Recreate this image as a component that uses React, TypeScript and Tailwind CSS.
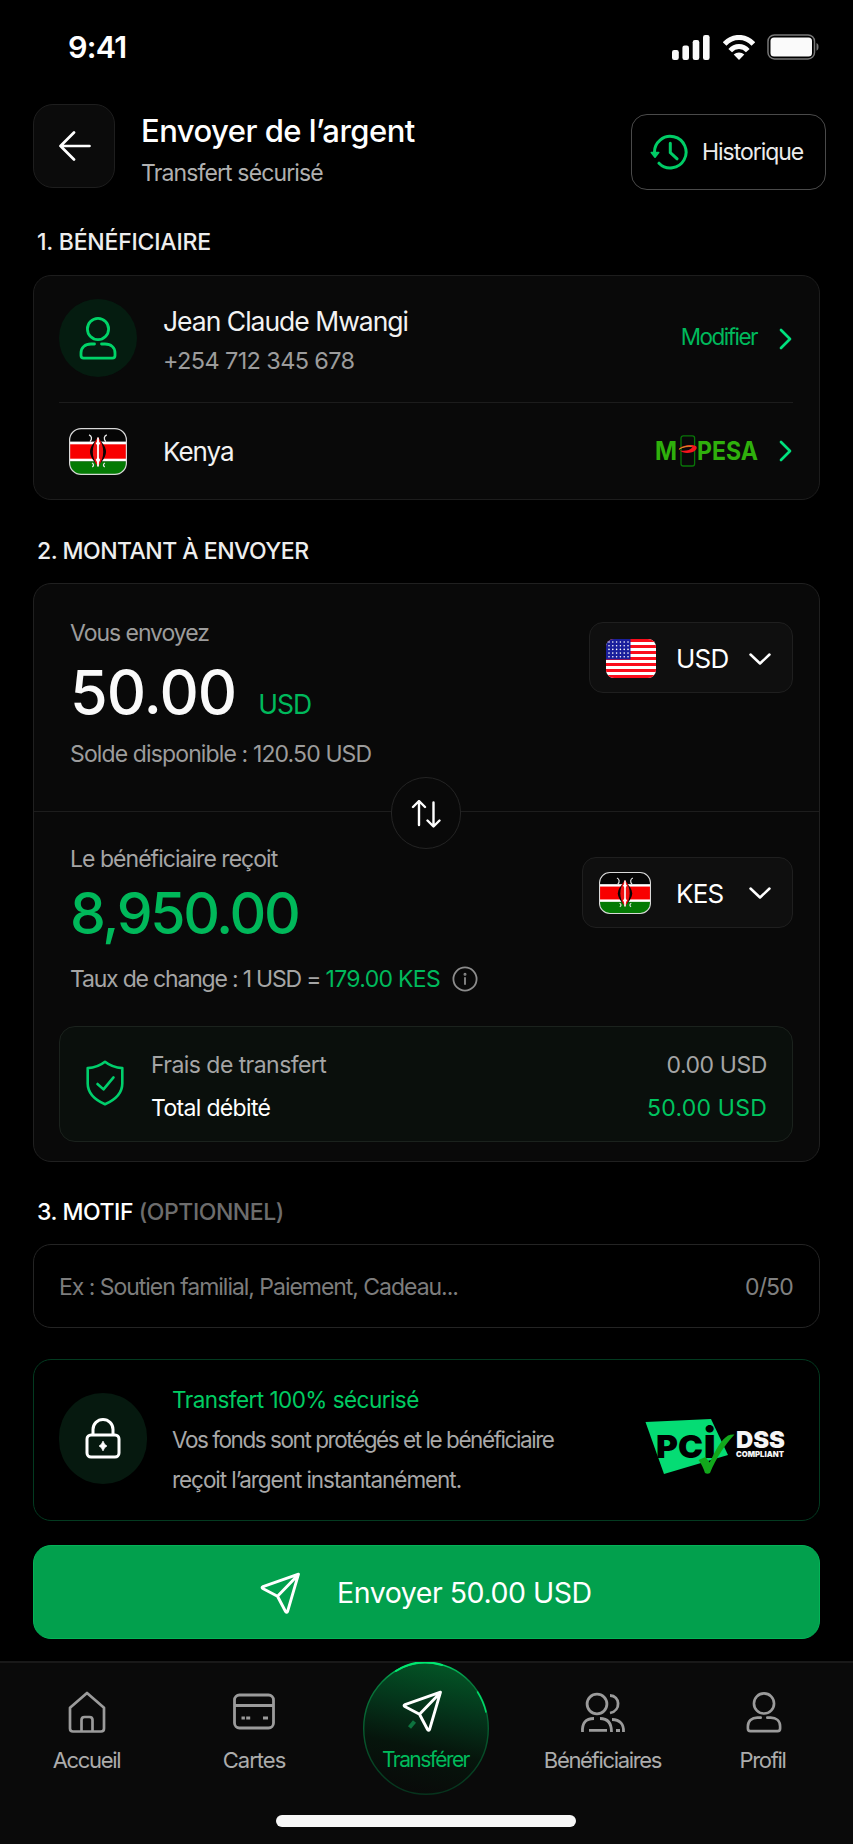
import React, { useState } from "react";

const KenyaFlag: React.FC<{ className?: string }> = ({ className }) => (
    <svg viewBox="0 0 58 47" preserveAspectRatio="none" className={className}>
        <clipPath id="kenya-clip">
            <rect x="0.5" y="0.5" width="57" height="46" rx="12" />
        </clipPath>
        <g clipPath="url(#kenya-clip)">
            <rect width="58" height="47" fill="#050505" />
            <rect y="13.6" width="58" height="20" fill="#fff" />
            <rect y="16.3" width="58" height="14.4" fill="#f80000" />
            <rect y="33.4" width="58" height="14" fill="#047a04" />
            <path d="M29 10.5c5 4.500 8 9 8 13.200S34 33 29 37.500c-5-4.500-8-9.600-8-13.800S24 15 29 10.500z" fill="#0a0404" />
            <path d="M29 9c3.800 5 5.200 10 5.200 14.800S32.800 34 29 38.800c-3.800-4.800-5.200-10.200-5.200-15S25.200 14 29 9z" fill="#f01010" />
            <path d="M29 9.500v29" stroke="#fff" strokeWidth="1.800" />
            <path d="M29 12l2.300 3.500-2.300 2.500-2.300-2.500zM29 29l2.300 2.700-2.300 4-2.300-4z" fill="#fff" />
            <path d="M20 6.800c2.800 1 3.400 4.200 1 6.800M37.800 6.800c-2.800 1-3.400 4.200-1 6.800M23 35c2 .8 2 3 .2 3.800M36 35c-2 .8-2 3-.2 3.800" stroke="#e8e8e8" strokeWidth="1.300" fill="none" />
        </g>
        <rect x="0.6" y="0.6" width="56.800" height="45.800" rx="11.500" fill="none" stroke="#d8d8d8" strokeWidth="1.200" />
    </svg>
);

const UsaFlag: React.FC = () => (
    <svg viewBox="0 0 50 39" className="h-[39px] w-[50px]">
        <clipPath id="usa-clip">
            <rect width="50" height="39" rx="8" />
        </clipPath>
        <g clipPath="url(#usa-clip)">
            <rect width="50" height="39" fill="#fff" />
            {[0, 1, 2, 3, 4, 5, 6].map((i) => (
                <rect key={i} y={i * 6} width="50" height="3" fill="#fb0d1b" />
            ))}
            <rect width="24.500" height="20.500" fill="#1a1f9c" />
            {[0, 1, 2, 3, 4].map((row) =>
                [0, 1, 2, 3, 4, 5].map((col) => (
                    <circle key={`${row}-${col}`} cx={3 + col * 3.8} cy={3 + row * 3.7} r="0.8" fill="#fff" />
                ))
            )}
        </g>
    </svg>
);

const PlaneIcon: React.FC = () => (
    <svg viewBox="0 0 41 42" className="h-[42px] w-[41px]" fill="none" stroke="currentColor" strokeWidth="2.900" strokeLinecap="round" strokeLinejoin="round">
        <path d="M38.500 2.200L3 14.600q-1.800.8-.2 1.900l14.700 7.800 8.200 15.400q1.100 1.400 1.900-.3zM17.500 24.300L37.600 3.600" />
    </svg>
);

const PersonIcon: React.FC<{ className?: string }> = ({ className }) => (
    <svg viewBox="0 0 38 44" className={className} fill="none" stroke="currentColor" strokeWidth="2.800" strokeLinecap="round" strokeLinejoin="round">
        <circle cx="19" cy="13" r="10.600" />
        <path d="M15.500 28H12C6 28 2 31.500 2 37v2.500Q2 42.200 4.700 42.200h28.600Q36 42.200 36 39.500V37c0-5.500-4-9-10-9h-3.500" />
    </svg>
);

const ChevronRight: React.FC = () => (
    <svg viewBox="0 0 13 22" className="h-[22px] w-[13px]" fill="none" stroke="#00e07e" strokeWidth="2.700" strokeLinecap="round" strokeLinejoin="round">
        <path d="M2 2l9 9-9 9" />
    </svg>
);

const ChevronDown: React.FC = () => (
    <svg viewBox="0 0 22 12" className="h-3 w-[22px]" fill="none" stroke="currentColor" strokeWidth="2.500" strokeLinecap="round" strokeLinejoin="round">
        <path d="M1.500 1.500l9.500 9 9.500-9" />
    </svg>
);

const StatusBar: React.FC = () => (
    <div className="flex h-[104px] items-start justify-between pt-[29px] pr-[34px] pl-[68px]">
        <span className="text-[30.500px] leading-9 font-semibold tracking-[-0.025em]">9:41</span>
        <div className="flex items-center pt-[5px]">
            <svg viewBox="0 0 38 25" className="h-[25px] w-[38px]" fill="#fafafa">
                <rect x="0" y="15" width="6.800" height="10" rx="2.200" />
                <rect x="10.400" y="10.500" width="6.600" height="14.500" rx="2.200" />
                <rect x="20.700" y="5" width="6.600" height="20" rx="2.200" />
                <rect x="31" y="0" width="6.600" height="25" rx="2.200" />
            </svg>
            <svg viewBox="0 0 32 25" className="ml-[13px] h-[25px] w-8" fill="none" stroke="#fafafa" strokeWidth="5">
                <path d="M1.600 9C9.500 0.200 22.500 0.200 30.400 9" />
                <path d="M7.200 15.600c5-5.400 12.600-5.400 17.600 0" />
                <path d="M16 25l-5.300-5.600c3-2.700 7.600-2.700 10.600 0z" fill="#fafafa" stroke="none" />
            </svg>
            <svg viewBox="0 0 52 26" className="ml-3 h-[26px] w-[52px]">
                <rect x="1" y="0.900" width="46.500" height="24" rx="6.500" fill="none" stroke="#777" strokeWidth="1.500" />
                <rect x="3.500" y="3.600" width="41.500" height="18.800" rx="3.500" fill="#fafafa" />
                <path d="M49.500 9c1.700.7 2 2 2 3.800s-.3 3.200-2 4z" fill="#777" />
            </svg>
        </div>
    </div>
);

const Header: React.FC = () => (
    <header className="flex h-[84px] items-start pr-[27px] pl-[33px]">
        <button className="flex h-[84px] w-[82px] items-center justify-center rounded-[20px] border border-[#1e1e1e] bg-[#0b0b0b] pl-[2px]">
            <svg viewBox="0 0 32 30" className="h-[30px] w-8" fill="none" stroke="currentColor" strokeWidth="2.700" strokeLinecap="round" strokeLinejoin="round">
                <path d="M15 1.500L1.500 15 15 28.500M1.500 15h29" />
            </svg>
        </button>
        <div className="ml-[26px] flex flex-1 flex-col pt-2">
            <h1 className="text-[31px] leading-[37px] font-medium tracking-[-0.017em]">Envoyer de l’argent</h1>
            <p className="mt-[9px] text-[23px] leading-[30px] tracking-[-0.038em] text-[#b0b0b0]">Transfert sécurisé</p>
        </div>
        <button className="mt-[10px] flex h-[76px] w-[195px] items-center rounded-2xl border border-[#4a4a4a] pl-[18px]">
            <svg viewBox="0 0 38 36" className="h-9 w-[38px]" fill="none" stroke="#00cc66" strokeWidth="3" strokeLinecap="round">
                <path d="M4.500 19A15.800 15.800 0 1 1 9 29.200" />
                <path d="M20.300 9.200v9.300l6.800 6.300" />
                <path d="M1.300 18.600h7.400l-3.700 4.600z" fill="#00cc66" strokeWidth="1.600" strokeLinejoin="round" />
            </svg>
            <span className="ml-[14px] text-[23px] leading-[30px] tracking-[-0.045em] text-[#ececec]">Historique</span>
        </button>
    </header>
);

const Beneficiary: React.FC = () => (
    <section className="mt-[21px] flex h-[225px] flex-col rounded-[18px] border border-[#1d1d1d] bg-[#090909] pr-[26px] pl-[25px]">
        <div className="flex h-[127px] items-center border-b border-[#1c1c1c]">
            <div className="mt-[-2px] flex h-[78px] w-[78px] items-center justify-center rounded-full bg-[#051c10] text-[#00d468]">
                <PersonIcon className="h-[44px] w-[38px]" />
            </div>
            <div className="ml-[26px] flex flex-1 flex-col pt-1">
                <span className="text-[26.500px] leading-[36px] tracking-[-0.038em] text-[#f2f2f2]">Jean Claude Mwangi</span>
                <span className="mt-1 text-[23.500px] leading-[36px] tracking-[-0.027em] text-[#9c9c9c]">+254 712 345 678</span>
            </div>
            <span className="mt-[-5px] text-[22.500px] tracking-[-0.067em] text-[#00b95c]">Modifier</span>
            <span className="mt-[-1px] mr-px ml-[22px]"><ChevronRight /></span>
        </div>
        <div className="flex h-[96px] items-center">
            <KenyaFlag className="ml-[10px] h-[47px] w-[58px]" />
            <span className="ml-[36px] flex-1 text-[26px] tracking-[-0.04em] text-[#f2f2f2]">Kenya</span>
            <svg viewBox="0 0 102 32" className="h-8 w-[102px] overflow-visible">
                <text x="-1" y="24.500" textLength="22" lengthAdjust="spacingAndGlyphs" fill="#2fb00c" className="font-['Inter'] text-[25.500px] font-bold">M</text>
                <rect x="25" y="0.800" width="13.600" height="30.200" rx="2.200" fill="none" stroke="#087408" strokeWidth="1.300" />
                <path d="M22.500 14.500c2-3 8-4.800 15-4.300 5 .6 4 5-1.500 7-4.500 1.500-10 .8-12-1.700 5.500 1 10-.2 12.500-3.200-5-1-10 .6-14 2.200z" fill="#f5141c" />
                <path d="M23 14.300c4-2.600 8-3.600 12.500-3" stroke="#c4a126" strokeWidth="1" fill="none" />
                <text x="41" y="24.500" textLength="61" lengthAdjust="spacingAndGlyphs" fill="#2fb00c" className="font-['Inter'] text-[25.500px] font-bold">PESA</text>
            </svg>
            <span className="mr-px ml-[21px]"><ChevronRight /></span>
        </div>
    </section>
);

const Amount: React.FC = () => (
    <section className="mt-5 flex h-[579px] flex-col rounded-[18px] border border-[#202020] bg-[#090909]">
        <div className="relative flex h-[228px] justify-between border-b border-[#1d1d1d] pr-[26px] pl-9">
            <div className="flex flex-col pt-[34px]">
                <span className="text-[23px] leading-[30px] tracking-[-0.045em] text-[#9c9c9c]">Vous envoyez</span>
                <div className="mt-[9px] flex items-baseline">
                    <span className="text-[61px] leading-[70px] font-medium tracking-[-0.016em] text-[#fafafa]">50.00</span>
                    <span className="ml-[22px] text-[26.500px] tracking-[-0.035em] text-[#00b95c]">USD</span>
                </div>
                <span className="mt-[12px] text-[23px] leading-[30px] tracking-[-0.038em] text-[#9c9c9c]">Solde disponible : 120.50 USD</span>
            </div>
            <button className="mt-[38px] flex h-[71px] w-[204px] items-center rounded-[14px] border border-[#1f1f1f] bg-[#0f0f0f] pt-[2px] pl-4">
                <UsaFlag />
                <span className="ml-[20px] w-[73px] text-left text-[26px] tracking-[-0.03em]">USD</span>
                <ChevronDown />
            </button>
            <button className="absolute top-[193px] left-[357px] flex h-[72px] w-[70px] items-center justify-center rounded-full border border-[#242424] bg-[#090909] pt-px">
                <svg viewBox="0 0 30 28" className="h-7 w-[30px]" fill="none" stroke="currentColor" strokeWidth="2.400" strokeLinecap="round" strokeLinejoin="round">
                    <path d="M2 7l6-6 6 6M8 1.500V25M16.500 20.500l6 6 6-6M22.500 26V2.500" />
                </svg>
            </button>
        </div>
        <div className="flex h-[214px] justify-between pr-[26px] pl-9">
            <div className="flex flex-col pt-8">
                <span className="text-[23px] leading-[30px] tracking-[-0.042em] text-[#a5a5a5]">Le bénéficiaire reçoit</span>
                <span className="mt-[5px] text-[57px] leading-[70px] font-medium tracking-[-0.041em] text-[#00b85a]">8,950.00</span>
                <div className="mt-[15px] flex items-center">
                    <span className="text-[23px] leading-[30px] tracking-[-0.052em] text-[#a5a5a5]">
                        Taux de change : 1 USD = <span className="tracking-[-0.03em] text-[#00b95c]">179.00 KES</span>
                    </span>
                    <svg viewBox="0 0 26 26" className="ml-3 h-[26px] w-[26px]" fill="none" stroke="#8c8c8c" strokeWidth="1.800" strokeLinecap="round">
                        <circle cx="13" cy="13" r="11.600" />
                        <path d="M13 12v6" />
                        <circle cx="13" cy="8.300" r="0.600" />
                    </svg>
                </div>
            </div>
            <button className="mt-[45px] flex h-[71px] w-[211px] items-center rounded-[14px] border border-[#1f1f1f] bg-[#0f0f0f] pl-4">
                <KenyaFlag className="h-[42px] w-[52px]" />
                <span className="mt-[2px] ml-[25px] w-[73px] text-left text-[26px] tracking-[-0.03em]">KES</span>
                <ChevronDown />
            </button>
        </div>
        <div className="mr-[26px] ml-[25px] flex h-[116px] items-center rounded-2xl border border-[#1b221d] bg-[#0a0f0c] pr-[25px] pl-[26px]">
            <svg viewBox="0 0 38 46" className="mt-[-2px] h-[46px] w-[38px]" fill="none" stroke="#00cf6c" strokeWidth="2.600" strokeLinecap="round" strokeLinejoin="round">
                <path d="M19 1.800c5 4 10.500 6 17.300 6.300v15.400c0 10-6.500 16-17.300 20.800C8.200 39.500 1.700 33.500 1.700 23.500V8.100C8.500 7.800 14 5.800 19 1.800z" />
                <path d="M11.500 24l6 5.400 10-12" />
            </svg>
            <div className="mt-1 ml-[27px] flex flex-1 flex-col gap-[13px] text-[23px] leading-[30px]">
                <div className="flex justify-between text-[#a5a5a5]">
                    <span className="tracking-[-0.024em]">Frais de transfert</span>
                    <span className="tracking-[-0.018em]">0.00 USD</span>
                </div>
                <div className="flex justify-between">
                    <span className="tracking-[-0.029em]">Total débité</span>
                    <span className="tracking-[0.01em] text-[#00c45f]">50.00 USD</span>
                </div>
            </div>
        </div>
    </section>
);

const PciLogo: React.FC = () => (
    <svg viewBox="0 0 142 58" className="mt-[13px] h-[58px] w-[142px] overflow-visible">
        <path d="M0.500 4L66 1l17 36L19 56z" fill="#05dc74" />
        <text x="11" y="40" textLength="47" lengthAdjust="spacingAndGlyphs" fill="#000" className="font-['Inter'] text-[31.500px] font-black">PC</text>
        <text x="58.500" y="40" fill="#000" className="font-['Inter'] text-[42px] font-black">i</text>
        <path d="M53.500 42l7-3 4.200 5.500C70.500 32 76 22 83 17.500q3.500-1.500 6.500-1C80 27 71 40 65 55q-2.500 1.500-5 0c-1.500-5-3.500-9-6.500-13z" fill="#12a81c" />
        <text x="91" y="30" textLength="49" lengthAdjust="spacingAndGlyphs" fill="#f5f5f5" className="font-['Inter'] text-[23px] font-black">DSS</text>
        <text x="91" y="39.300" textLength="48" lengthAdjust="spacingAndGlyphs" fill="#f5f5f5" className="font-['Inter'] text-[8px] font-black">COMPLIANT</text>
    </svg>
);

const Security: React.FC = () => (
    <section className="mt-[31px] flex h-[162px] items-center rounded-[18px] border border-[#033a20] pr-8 pl-[25px]">
        <div className="mt-[-3px] flex h-[91px] w-[88px] items-center justify-center rounded-full bg-[#06190f]">
            <svg viewBox="0 0 36 41" className="h-[41px] w-9" fill="none" stroke="currentColor" strokeWidth="3" strokeLinejoin="round">
                <rect x="2" y="17" width="32" height="22" rx="4" />
                <path d="M8 17v-5.500a10 10 0 0 1 20 0V17" />
                <path d="M18 23l1.700 3.300L22 28l-2.300 1.700L18 33l-1.700-3.300L14 28l2.300-1.700z" fill="currentColor" strokeWidth="0.600" />
            </svg>
        </div>
        <div className="ml-[25px] flex flex-1 flex-col text-[22.500px] leading-10">
            <span className="tracking-[-0.024em] text-[#00cc62]">Transfert 100% sécurisé</span>
            <span className="tracking-[-0.064em] whitespace-nowrap text-[#a8a8a8]">Vos fonds sont protégés et le bénéficiaire</span>
            <span className="tracking-[-0.047em] whitespace-nowrap text-[#a8a8a8]">reçoit l’argent instantanément.</span>
        </div>
        <PciLogo />
    </section>
);

const BottomNav: React.FC = () => (
    <nav className="mt-[22px] flex h-[183px] flex-col items-center border-t-2 border-[#191919] bg-[#0a0a0a]">
        <div className="flex h-[133px] w-full text-[22px] leading-[30px] tracking-[-0.06em] text-[#acacac]">
            <div className="flex w-[172px] flex-col items-center pt-[28px] pl-px">
                <svg viewBox="0 0 38 42" className="h-[42px] w-[38px]" fill="none" stroke="#9b9b9b" strokeWidth="2.700" strokeLinecap="round" strokeLinejoin="round">
                    <path d="M19 2L2 16.800v20.700Q2 40.500 5 40.500h28q3 0 3-3V16.800zM13.500 40V29q0-3 3-3h5q3 0 3 3v11" />
                </svg>
                <span className="mt-[12px]">Accueil</span>
            </div>
            <div className="flex w-[164px] flex-col items-center pt-[28px]">
                <svg viewBox="0 0 42 42" className="h-[42px] w-[42px]" fill="none" stroke="#9b9b9b" strokeWidth="2.800">
                    <rect x="1.500" y="4" width="39" height="33" rx="5" />
                    <path d="M2 14.500h38M8.500 27h3.400M13.200 27h4M30 27h5" />
                </svg>
                <span className="mt-[12px] tracking-[-0.045em]">Cartes</span>
            </div>
            <div className="flex flex-1 justify-center">
                <div className="relative mt-[-1px] flex h-[133px] w-[126px] flex-col items-center text-[#00bb5b]">
                    <svg viewBox="0 0 126 133" className="absolute inset-0 h-[133px] w-[126px]">
                        <defs>
                            <linearGradient id="orb" x1="0.600" y1="0" x2="0.400" y2="1">
                                <stop offset="0" stopColor="#035526" />
                                <stop offset="0.350" stopColor="#04331a" />
                                <stop offset="0.650" stopColor="#06150c" />
                                <stop offset="1" stopColor="#090a09" />
                            </linearGradient>
                            <linearGradient id="orb-ring" x1="0" y1="0" x2="0" y2="1">
                                <stop offset="0" stopColor="#00d968" />
                                <stop offset="0.150" stopColor="#067a3c" />
                                <stop offset="1" stopColor="#06321c" />
                            </linearGradient>
                        </defs>
                        <ellipse cx="63" cy="66.500" rx="62.300" ry="65.800" fill="url(#orb)" stroke="url(#orb-ring)" strokeWidth="1.400" />
                        <path d="M33 9C49-1.500 66-1 79 3" stroke="#00e870" strokeWidth="2" fill="none" strokeLinecap="round" />
                        <path d="M114.500 30q6 9.500 8.500 20" stroke="#00d968" strokeWidth="1.500" fill="none" strokeLinecap="round" />
                        <path d="M51.500 59.500l-5 6" stroke="#10874a" strokeWidth="4" opacity="0.800" />
                    </svg>
                    <div className="relative mt-[28px] ml-[-7px] text-white"><PlaneIcon /></div>
                    <span className="relative mt-[13px] text-[21px] tracking-[-0.075em]">Transférer</span>
                </div>
            </div>
            <div className="flex w-[174px] flex-col items-center pt-[28px] pl-px">
                <svg viewBox="0 0 46 42" className="h-[42px] w-[46px]" fill="none" stroke="#9b9b9b" strokeWidth="2.800">
                    <circle cx="17" cy="13" r="9.900" />
                    <path d="M30 4.500c10 0 11.500 15 0 17.500M2.500 41c-.5-9 3-13.500 11.500-13.500M20 27.500c8.500 0 11.500 5 11.500 13.500M9 39.300h18M32 28.500c8 0 12 5 11.500 12.500M36 39.500h4" />
                </svg>
                <span className="mt-[12px]">Bénéficiaires</span>
            </div>
            <div className="flex w-[164px] flex-col items-center pt-[28px] pr-[14px]">
                <PersonIcon className="h-[42px] w-[36px] text-[#9b9b9b]" />
                <span className="mt-[12px] mr-[3px]">Profil</span>
            </div>
        </div>
        <div className="mt-[19px] mr-[2px] h-[12px] w-[300px] rounded-full bg-[#f8f8f8]"></div>
    </nav>
);

const App: React.FC = () => {
    const [motif, setMotif] = useState<string>("");

    return (
        <div className="flex h-[1844px] w-[853px] flex-col overflow-hidden bg-black font-['Inter','Liberation_Sans',sans-serif] text-white">
            <StatusBar />
            <Header />
            <main className="flex flex-col px-[33px]">
                <h2 className="mt-[42px] ml-1 text-[23px] leading-6 font-medium tracking-[-0.009em] text-[#eee]">1. BÉNÉFICIAIRE</h2>
                <Beneficiary />
                <h2 className="mt-[39px] ml-1 text-[23px] leading-6 font-medium tracking-[-0.022em] text-[#eee]">2. MONTANT À ENVOYER</h2>
                <Amount />
                <h2 className="mt-[38px] ml-1 text-[23px] leading-6 font-medium tracking-[-0.019em]">
                    3. MOTIF <span className="text-[#6d6d6d]">(OPTIONNEL)</span>
                </h2>
                <div className="mt-5 flex h-[84px] items-center rounded-[18px] border border-[#242424] pt-[2px] pr-[26px] pl-[25px] text-[23px] tracking-[-0.045em] text-[#808080]">
                    <input
                        value={motif}
                        onChange={(e) => setMotif(e.target.value)}
                        type="text"
                        maxLength={50}
                        className="min-w-0 flex-1 bg-transparent outline-none placeholder:text-[#7d7d7d]"
                        placeholder="Ex : Soutien familial, Paiement, Cadeau..."
                    />
                    <span className="tracking-[-0.035em]">{motif.length}/50</span>
                </div>
                <Security />
                <button className="mt-6 flex h-[94px] items-center rounded-[18px] border border-[#04b458] bg-[#02a04d] pt-px pl-[226px]">
                    <PlaneIcon />
                    <span className="mt-[2px] ml-[36px] text-[28.500px] tracking-[-0.016em]">Envoyer 50.00 USD</span>
                </button>
            </main>
            <BottomNav />
        </div>
    );
};

export default App;
